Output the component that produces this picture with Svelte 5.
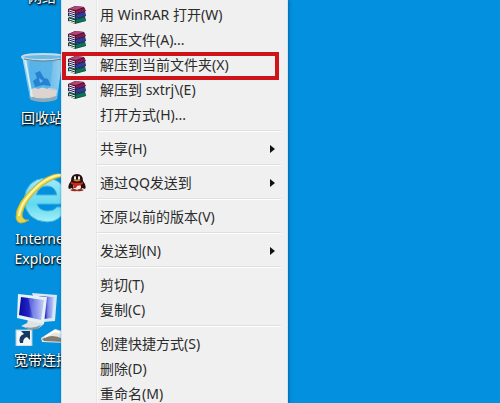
<script>
    const shortcuts = [
        { icon: "network", lines: ["网络"] },
        { icon: "bin", lines: ["回收站"] },
        { icon: "ie", lines: ["Internet", "Explorer"] },
        { icon: "dialup", lines: ["宽带连接"] }
    ];

    const groups = [
        [
            { label: "用 WinRAR 打开(W)", icon: "rar" },
            { label: "解压文件(A)...", icon: "rar" },
            { label: "解压到当前文件夹(X)", icon: "rar", marked: true },
            { label: "解压到 sxtrj\\(E)", icon: "rar" },
            { label: "打开方式(H)..." }
        ],
        [{ label: "共享(H)", submenu: true }],
        [{ label: "通过QQ发送到", icon: "qq", submenu: true }],
        [{ label: "还原以前的版本(V)" }],
        [{ label: "发送到(N)", submenu: true }],
        [{ label: "剪切(T)" }, { label: "复制(C)" }],
        [
            { label: "创建快捷方式(S)" },
            { label: "删除(D)" },
            { label: "重命名(M)" }
        ]
    ];
</script>

<main class="desktop">
    <div class="shortcuts">
        {#each shortcuts as item}
            <a class="shortcut" href="#{item.icon}">
                {#if item.icon === "bin"}
                    <svg class="picture" viewBox="0 0 54 54">
                        <defs>
                            <linearGradient id="glass" x1="0" x2="1">
                                <stop offset="0" stop-color="#b5def5" />
                                <stop offset=".2" stop-color="#55b2e8" />
                                <stop offset=".75" stop-color="#5cb5e8" />
                                <stop offset="1" stop-color="#b7e0f6" />
                            </linearGradient>
                        </defs>
                        <path d="M7 6 L48 6 L42 49 Q28 55 15 49Z" fill="url(#glass)" />
                        <path d="M15 41 Q18 36 23 39 Q28 36 32 39 Q37 36 42 40 L41 46 Q28 51 15 46Z" fill="#ddd4d0" />
                        <path d="M14 46 Q28 52 42 46 L41 50 Q28 54 16 50Z" fill="#8da9ba" />
                        <path d="M38 12 L45 11 L41 40 L35 40Z" fill="#8bcaf0" opacity=".6" />
                        <path d="M20 23 L25 21 L29 28 L33 29 L36 36 L28 35 L20 37 L18 31 L22 28Z" fill="#2583d2" />
                        <path d="M24 28 L28 31 L25 33Z" fill="#6bbcec" />
                        <path d="M10 9 L17 47" stroke="#d5effb" stroke-width="2" />
                        <ellipse cx="28" cy="7" rx="21" ry="3" fill="#6cbbe6" stroke="#c8dce7" stroke-width="2" />
                        <path d="M9 9 Q28 13 47 9" fill="none" stroke="#667d8a" />
                    </svg>
                {:else if item.icon === "ie"}
                    <svg class="picture" viewBox="0 0 54 54">
                        <defs>
                            <linearGradient id="blue" x1="0" y1="0" x2="0" y2="1">
                                <stop offset="0" stop-color="#a2e9fa" />
                                <stop offset=".6" stop-color="#62d9f0" />
                                <stop offset="1" stop-color="#a5f0f8" />
                            </linearGradient>
                        </defs>
                        <path d="M52 33 H22 Q24 40 33 40 Q39 40 42 36 H51 Q46 51 32 51 Q11 50 9 29 Q11 8 31 7 Q52 8 52 33Z M21 24 H42 Q40 15 32 15 Q24 15 21 24Z" fill="url(#blue)" fill-rule="evenodd" stroke="#45b5dc" />
                        <path d="M52 6 Q42 -3 22 13 Q0 32 1 47 Q3 56 14 49 Q7 50 7 43 Q10 29 27 15 Q42 4 52 6Z" fill="#e4d64a" stroke="#c0ae3a" />
                        <path d="M4 45 Q5 31 25 13 Q38 3 48 4" fill="none" stroke="#fbf6a5" stroke-width="2" />
                    </svg>
                {:else if item.icon === "dialup"}
                    <svg class="picture" viewBox="0 0 54 54">
                        <defs>
                            <linearGradient id="screen" x1="0" y1="0" x2="1" y2="0">
                                <stop offset="0" stop-color="#0808a0" />
                                <stop offset=".4" stop-color="#2424c4" />
                                <stop offset=".6" stop-color="#7c86e8" />
                                <stop offset="1" stop-color="#c5d0fa" />
                            </linearGradient>
                        </defs>
                        <path d="M17 1 L42 3 L40 29 L28 30Z" fill="#d9e8ef" />
                        <path d="M24 4 L39 5 L37 26 L29 27Z" fill="url(#screen)" />
                        <path d="M13 28 L28 28 L29 32 L24 36 L14 37 L6 34 L12 31Z" fill="#dce3e2" />
                        <path d="M11 35 Q18 37 26 33 L23 37 L13 38Z" fill="#8b989b" />
                        <path d="M3 2 L32 5 L29 32 L2 26Z" fill="#e6f1f4" />
                        <path d="M6 5 L29 8 L26 28 L4 23Z" fill="url(#screen)" />
                        <path d="M13 6 L17 7 L22 27 L18 26Z" fill="#8594ed" opacity=".45" />
                        <path d="M26 46 L40 37 L54 41 L52 51 L27 50Z" fill="#e6e5df" />
                        <path d="M27 47 Q37 41 48 47 L49 50 L29 49Z" fill="#827d73" />
                        <path d="M30 45 L40 39 L50 42" fill="none" stroke="#fff" stroke-width="2" />
                        <rect x="1" y="38" width="16" height="16" fill="#f2f7fa" stroke="#b2c5d0" />
                        <path d="M5 51 Q3 44 9 42 L6 39 H15 V48 L12 45 Q8 46 8 51Z" fill="#173763" />
                    </svg>
                {:else}
                    <svg class="picture" viewBox="0 0 54 54">
                        <rect x="6" y="8" width="40" height="30" fill="#dbe9f0" />
                        <rect x="9" y="11" width="34" height="24" fill="#2b5fd0" />
                    </svg>
                {/if}
                <span class="caption">
                    {#each item.lines as line}
                        <span>{line}</span>
                    {/each}
                </span>
            </a>
        {/each}
    </div>

    <div class="menu" role="menu">
        {#each groups as group}
            <div class="group">
                {#each group as item}
                    <button class="item" class:marked={item.marked} role="menuitem">
                        <span class="icon">
                            {#if item.icon === "rar"}
                                <svg width="18" height="18" viewBox="0 0 18 18">
                                    <path d="M0 12 L4 9 L17 10 L18 15 L7 18 L0 15Z" fill="#173f36" />
                                    <path d="M1 12 L12 9 L17 10 L8 13Z" fill="#2b9a75" />
                                    <path d="M8 14 L17 11 V15 L8 17Z" fill="#08745a" />
                                    <path d="M1 13 L7 15 M1 15 L7 17" stroke="#e9f3ec" />
                                    <path d="M0 7 L4 4 L17 5 L18 10 L7 13 L0 10Z" fill="#202158" />
                                    <path d="M1 7 L12 4 L17 5 L8 8Z" fill="#5867bd" />
                                    <path d="M8 9 L17 6 V10 L8 12Z" fill="#303b9c" />
                                    <path d="M1 8 L7 10 M1 10 L7 12" stroke="#e8eff9" />
                                    <path d="M0 3 L7 0 L16 1 L18 5 L7 8 L0 6Z" fill="#4c1434" />
                                    <path d="M1 3 L8 0 L16 1 L8 4Z" fill="#b34578" />
                                    <path d="M8 5 L17 2 V5 L8 7Z" fill="#891a50" />
                                    <path d="M1 4 L7 6 M1 6 L7 8" stroke="#f7e8ef" />
                                </svg>
                            {:else if item.icon === "qq"}
                                <svg width="18" height="18" viewBox="0 0 18 18">
                                    <path d="M3 7 Q3 0 9 0 Q15 0 15 7 Q19 12 17 15 L14 14 Q13 17 9 17 Q5 17 4 14 L1 15 Q-1 12 3 7Z" fill="#241010" />
                                    <ellipse cx="9" cy="13" rx="4" ry="3" fill="#f4e7e2" />
                                    <ellipse cx="7" cy="4" rx="1" ry="2" fill="#fff" />
                                    <ellipse cx="11" cy="4" rx="1" ry="2" fill="#fff" />
                                    <path d="M5 6 Q9 5 13 6 Q9 9 5 6Z" fill="#e8822d" />
                                    <path d="M3 8 Q9 10 15 8 L15 10 Q11 12 9 12 L8 14 H5 L6 11 L3 10Z" fill="#c8281f" />
                                    <path d="M2 16 Q6 14 9 16 Q12 14 16 16 Q13 18 9 17 Q5 18 2 16Z" fill="#9c2c1c" />
                                </svg>
                            {/if}
                        </span>
                        <span class="label">{item.label}</span>
                        {#if item.submenu}
                            <svg class="arrow" width="5" height="8" viewBox="0 0 5 8">
                                <path d="M0 0 L5 4 L0 8Z" fill="#111" />
                            </svg>
                        {/if}
                    </button>
                {/each}
            </div>
        {/each}
    </div>
</main>

<style>
    :global(body) {
        margin: 0;
    }

    .desktop {
        position: relative;
        height: 100vh;
        overflow: hidden;
        background: #0290df;
        font-family: "Noto Sans", "Noto Sans CJK SC", sans-serif;
        font-size: 14px;
    }

    .shortcuts {
        display: flex;
        flex-direction: column;
        width: 84px;
        margin-top: -71px;
    }

    .shortcut {
        display: flex;
        flex-direction: column;
        align-items: center;
        gap: 4px;
        height: 121px;
        color: #fff;
        text-decoration: none;
        text-shadow: 1px 1px 2px #000, 0 1px 2px #000;
    }

    .picture {
        width: 54px;
        height: 54px;
        flex: none;
    }

    .caption {
        display: flex;
        flex-direction: column;
        align-items: center;
        line-height: 20px;
        white-space: nowrap;
    }

    .menu {
        position: absolute;
        top: 0;
        left: 61px;
        box-sizing: border-box;
        width: 227px;
        padding-top: 2px;
        border: solid #d5e3eb;
        border-width: 0 1px;
        background: linear-gradient(90deg, #f1f1f1 34px, #e6e7e7 34px, #e6e7e7 35px, #fafafa 35px, #fafafa 36px, #f0f0f0 36px);
        box-shadow: 1px 0 3px #0668a8;
    }

    .group + .group {
        padding-top: 3px;
    }

    .group + .group::before {
        content: "";
        display: block;
        box-sizing: border-box;
        height: 2px;
        margin: 0 6px 4px 35px;
        border-bottom: 1px solid #fff;
        background: #e0e0e0;
    }

    .item {
        position: relative;
        display: flex;
        align-items: center;
        width: 100%;
        height: 25px;
        padding: 0 12px 0 6px;
        border: 0;
        background: none;
        color: #2b2b2b;
        font: inherit;
        line-height: 24px;
        text-align: left;
        white-space: nowrap;
    }

    .marked::after {
        content: "";
        position: absolute;
        inset: 0 8px -3px 0;
        border: 4px solid #cf1419;
    }

    .icon {
        display: flex;
        width: 32px;
        flex: none;
    }

    .label {
        flex: 1;
    }
</style>
